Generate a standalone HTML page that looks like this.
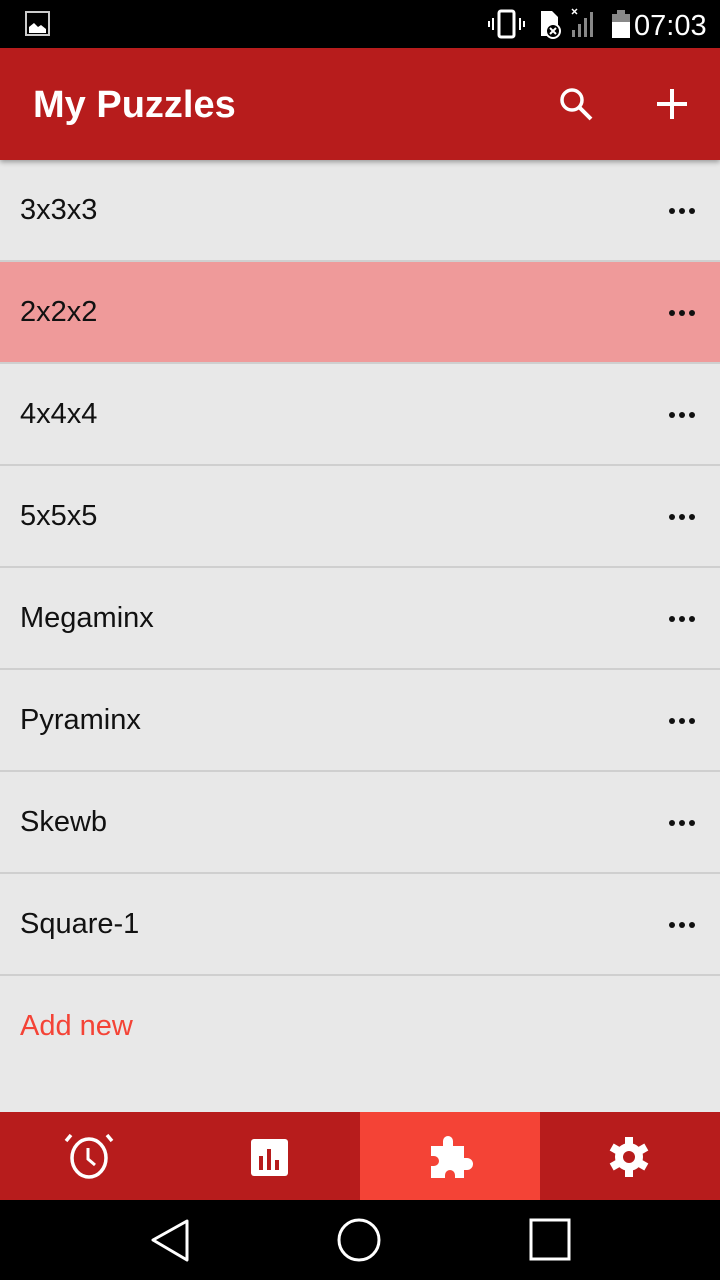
<!DOCTYPE html>
<html><head><meta charset="utf-8"><style>
*{margin:0;padding:0;box-sizing:border-box}
body{width:720px;height:1280px;background:#e8e8e8;font-family:"Liberation Sans",sans-serif;position:relative;overflow:hidden}
.sb{position:absolute;top:0;left:0;width:720px;height:48px;background:#000;color:#fff}
.ab{position:absolute;top:48px;left:0;width:720px;height:112px;background:#b71c1c;box-shadow:0 2px 5px rgba(0,0,0,.35);z-index:2}
.ab h1{position:absolute;left:33px;top:36px;font-size:38px;font-weight:bold;color:#fff}
.row{position:absolute;left:0;width:720px;height:102px;border-bottom:2px solid #cfcfcf}
.row span{position:absolute;left:20px;top:34px;font-size:29px;color:#111}
.dots{position:absolute;left:669px;top:48px;width:26px;height:6px}
.dots i{position:absolute;top:0;width:6px;height:6px;border-radius:3px;background:#111}
.bn{position:absolute;top:1112px;left:0;width:720px;height:88px;background:#b71c1c}
.nav{position:absolute;top:1200px;left:0;width:720px;height:80px;background:#000}
</style></head><body>
<div class="sb">
<svg width="720" height="48" style="position:absolute;left:0;top:0">
<rect x="26" y="12" width="23" height="23" fill="none" stroke="#ccc" stroke-width="2"/>
<path d="M29 33 L29 27 L34 23 L38 27 L41 25 L46 29 L46 33Z" fill="#fff"/>
<rect x="499" y="11" width="15" height="26" rx="2" fill="none" stroke="#fff" stroke-width="3"/>
<path d="M493 18v12M489 21v6M520 18v12M524 21v6" stroke="#fff" stroke-width="2"/>
<path d="M541 11h11l6 6v19h-17z" fill="#fff"/>
<circle cx="553" cy="31" r="7" fill="#000" stroke="#fff" stroke-width="2"/>
<path d="M550 28l6 6M556 28l-6 6" stroke="#fff" stroke-width="2"/>
<path d="M572 9l5 5M577 9l-5 5" stroke="#fff" stroke-width="1.5"/>
<rect x="572" y="30" width="3" height="7" fill="#888"/><rect x="578" y="24" width="3" height="13" fill="#888"/><rect x="584" y="18" width="3" height="19" fill="#888"/><rect x="590" y="12" width="3" height="25" fill="#888"/>
<rect x="612" y="14" width="18" height="24" fill="#888"/><rect x="617" y="10" width="8" height="4" fill="#888"/><rect x="612" y="22" width="18" height="16" fill="#fff"/>
<text x="634" y="35" font-size="29" fill="#fff" font-family="Liberation Sans">07:03</text>
</svg></div>
<div class="ab"><h1>My Puzzles</h1>
<svg width="720" height="112" style="position:absolute;left:0;top:0">
<circle cx="572" cy="52" r="10" fill="none" stroke="#fff" stroke-width="3.5"/>
<path d="M579 59l12 12" stroke="#fff" stroke-width="4"/>
<path d="M672 41v30M657 56h30" stroke="#fff" stroke-width="4"/>
</svg></div>
<div class="row" style="top:160px"><span>3x3x3</span><div class="dots"><i style="left:0"></i><i style="left:10px"></i><i style="left:20px"></i></div></div>
<div class="row" style="top:262px;background:#ef9a9a"><span>2x2x2</span><div class="dots"><i style="left:0"></i><i style="left:10px"></i><i style="left:20px"></i></div></div>
<div class="row" style="top:364px"><span>4x4x4</span><div class="dots"><i style="left:0"></i><i style="left:10px"></i><i style="left:20px"></i></div></div>
<div class="row" style="top:466px"><span>5x5x5</span><div class="dots"><i style="left:0"></i><i style="left:10px"></i><i style="left:20px"></i></div></div>
<div class="row" style="top:568px"><span>Megaminx</span><div class="dots"><i style="left:0"></i><i style="left:10px"></i><i style="left:20px"></i></div></div>
<div class="row" style="top:670px"><span>Pyraminx</span><div class="dots"><i style="left:0"></i><i style="left:10px"></i><i style="left:20px"></i></div></div>
<div class="row" style="top:772px"><span>Skewb</span><div class="dots"><i style="left:0"></i><i style="left:10px"></i><i style="left:20px"></i></div></div>
<div class="row" style="top:874px"><span>Square-1</span><div class="dots"><i style="left:0"></i><i style="left:10px"></i><i style="left:20px"></i></div></div>
<div style="position:absolute;left:20px;top:1010px;font-size:29px;color:#f44336">Add new</div>
<div class="bn">
<div style="position:absolute;left:360px;top:0;width:180px;height:88px;background:#f44336"></div>
<svg width="720" height="88" style="position:absolute;left:0;top:0">
<ellipse cx="89" cy="46" rx="17" ry="19" fill="none" stroke="#fff" stroke-width="3.5"/>
<path d="M88 36v11l7 6" fill="none" stroke="#fff" stroke-width="3"/>
<path d="M71 23l-5 6M107 23l5 6" stroke="#fff" stroke-width="3.5"/>
<rect x="251" y="27" width="37" height="37" rx="3" fill="#fff"/>
<rect x="259" y="44" width="4" height="14" fill="#b71c1c"/><rect x="267" y="37" width="4" height="21" fill="#b71c1c"/><rect x="275" y="48" width="4" height="10" fill="#b71c1c"/>
<path d="M431 34h12v-5a5 5 0 0 1 10 0v5h11v12h3a6 6 0 0 1 0 12h-3v8h-9v-3a5 5 0 0 0-10 0v3h-14v-12h3a5 5 0 0 0 0-10h-3z" fill="#fff"/>
<g transform="translate(629,45)" fill="#fff">
<circle r="14"/>
<g id="t"><rect x="-4" y="-20" width="8" height="8"/></g>
<use href="#t" transform="rotate(60)"/><use href="#t" transform="rotate(120)"/><use href="#t" transform="rotate(180)"/><use href="#t" transform="rotate(240)"/><use href="#t" transform="rotate(300)"/>
<circle r="6" fill="#b71c1c"/>
</g>
</svg></div>
<div class="nav">
<svg width="720" height="80" style="position:absolute;left:0;top:0">
<path d="M187 21L153 40L187 60Z" fill="none" stroke="#fff" stroke-width="3" stroke-linejoin="round"/>
<ellipse cx="359" cy="40" rx="20" ry="20" fill="none" stroke="#fff" stroke-width="3"/>
<rect x="531" y="20" width="38" height="39" fill="none" stroke="#fff" stroke-width="3"/>
</svg></div>
</body></html>
